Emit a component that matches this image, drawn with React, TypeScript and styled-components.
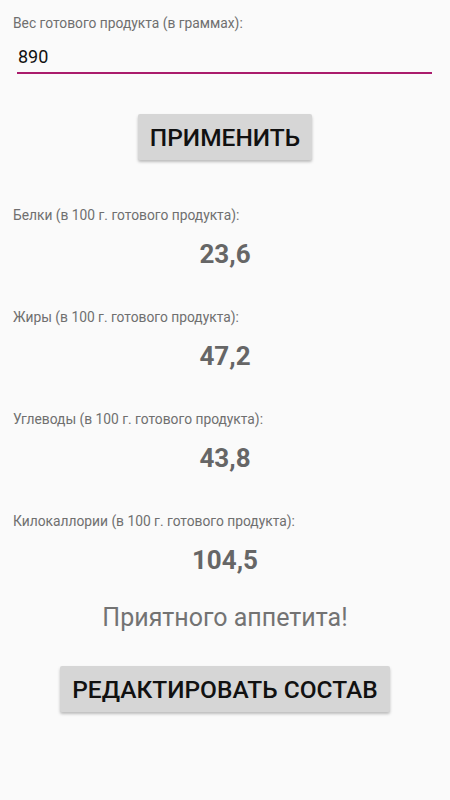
import React, { useState } from 'react'
import styled, { createGlobalStyle } from 'styled-components'

const GlobalStyle = createGlobalStyle`
  html, body {
    margin: 0;
    padding: 0;
    background: #fafafa;
    font-family: Roboto, "Noto Sans", sans-serif;
  }
`

const Screen = styled.div`
  width: 450px;
  height: 800px;
  box-sizing: border-box;
  padding: 14px 0 0;
  display: flex;
  flex-direction: column;
`

const FieldLabel = styled.div`
  padding-left: 13px;
  font-size: 13.8px;
  line-height: 18px;
  color: #6f6f6f;
`

const WeightInput = styled.input`
  margin: 12px 18px 0 17px;
  padding: 0 0 4px 1px;
  height: 24px;
  font-family: inherit;
  font-size: 18px;
  color: #111;
  background: transparent;
  border: none;
  border-bottom: 2px solid #aa1c6c;
  outline: none;
`

const ButtonRow = styled.div<{ $top: number }>`
  display: flex;
  justify-content: center;
  margin-top: ${(p) => p.$top}px;
`

const RaisedButton = styled.button<{ $width: number }>`
  width: ${(p) => p.$width}px;
  height: 46px;
  border: none;
  border-radius: 2px;
  background: #d6d6d6;
  box-shadow: 0 2px 3px rgba(0, 0, 0, 0.25);
  font-family: inherit;
  font-size: 24.5px;
  font-weight: 500;
  color: #111;
  text-transform: uppercase;
  padding: 0;
`

const Nutrient = styled.section`
  display: flex;
  flex-direction: column;
  margin-top: 39px;
  &:first-of-type {
    margin-top: 46px;
  }
`

const Value = styled.div`
  text-align: center;
  font-size: 26px;
  font-weight: 700;
  color: #666;
  line-height: 30px;
  margin-top: 15px;
`

const Wish = styled.div`
  margin-top: 28px;
  text-align: center;
  font-size: 25px;
  line-height: 30px;
  color: #737373;
`

const nutrients = [
  { label: 'Белки (в 100 г. готового продукта):', value: '23,6' },
  { label: 'Жиры (в 100 г. готового продукта):', value: '47,2' },
  { label: 'Углеводы (в 100 г. готового продукта):', value: '43,8' },
  { label: 'Килокаллории (в 100 г. готового продукта):', value: '104,5' },
]

export default function App() {
  const [weight, setWeight] = useState('890')

  return (
    <Screen>
      <GlobalStyle />
      <FieldLabel>Вес готового продукта (в граммах):</FieldLabel>
      <WeightInput value={weight} onChange={(e) => setWeight(e.target.value)} />
      <ButtonRow $top={40}>
        <RaisedButton $width={174}>Применить</RaisedButton>
      </ButtonRow>
      {nutrients.map((n) => (
        <Nutrient key={n.label}>
          <FieldLabel>{n.label}</FieldLabel>
          <Value>{n.value}</Value>
        </Nutrient>
      ))}
      <Wish>Приятного аппетита!</Wish>
      <ButtonRow $top={33}>
        <RaisedButton $width={330}>Редактировать состав</RaisedButton>
      </ButtonRow>
    </Screen>
  )
}
